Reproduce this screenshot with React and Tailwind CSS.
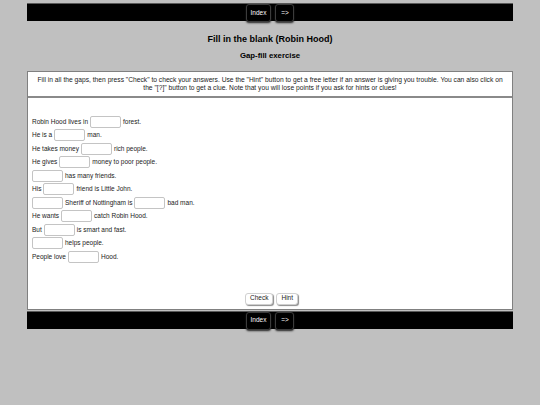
import React from 'react';

const sans = { fontFamily: '"Liberation Sans", Arial, sans-serif' };

const Gap = ({ first }) => (
  <span
    className={`inline-block w-[31px] h-[12px] border border-[#c4c4c4] rounded-[2px] bg-white align-middle ${
      first ? 'mr-[2px]' : 'mx-[2px]'
    }`}
  />
);

const NavBar = ({ className = '' }) => (
  <div className={`mx-[27px] h-[18px] bg-black border-t border-[#5a5a5a] flex justify-center items-start gap-[4px] ${className}`}>
    {['Index', '=>'].map((label) => (
      <button
        key={label}
        className="h-[18px] min-w-[19px] px-[4px] rounded-[3px] border border-[#3c3c3c] bg-black text-white text-[6.5px] leading-none shadow-[0_1px_2px_#222]"
      >
        {label}
      </button>
    ))}
  </div>
);

const lines = [
  ['Robin Hood lives in', 'gap', 'forest.'],
  ['He is a', 'gap', 'man.'],
  ['He takes money', 'gap', 'rich people.'],
  ['He gives', 'gap', 'money to poor people.'],
  ['gap', 'has many friends.'],
  ['His', 'gap', 'friend is Little John.'],
  ['gap', 'Sheriff of Nottingham is', 'gap', 'bad man.'],
  ['He wants', 'gap', 'catch Robin Hood.'],
  ['But', 'gap', 'is smart and fast.'],
  ['gap', 'helps people.'],
  ['People love', 'gap', 'Hood.'],
];

export default function App() {
  return (
    <div className="min-h-[405px] bg-[#c0c0c0] pt-[3px] text-[#222]" style={sans}>
      <NavBar />

      <h1 className="mt-[13px] text-center text-[9px] leading-[11px] font-bold text-black">
        Fill in the blank (Robin Hood)
      </h1>
      <h2 className="mt-[6px] text-center text-[7.8px] leading-[10px] font-bold text-black">
        Gap-fill exercise
      </h2>

      {/* Exercise panel */}
      <div className="mx-[27px] mt-[10px] bg-white border border-[#808080]">
        <div className="px-[4px] pt-[4px] pb-[5px] text-center text-[6.7px] leading-[7.5px] border-b-2 border-[#8a8a8a]">
          Fill in all the gaps, then press "Check" to check your answers. Use the "Hint" button to get a free letter if an
          answer is giving you trouble. You can also click on
          <br />
          the "[?]" button to get a clue. Note that you will lose points if you ask for hints or clues!
        </div>

        <div className="pt-[17px] px-[4px] text-[6.5px]">
          {lines.map((parts, i) => (
            <div key={i} className="h-[13.5px] flex items-center">
              {parts.map((p, j) => (p === 'gap' ? <Gap key={j} first={j === 0} /> : <span key={j}>{p}</span>))}
            </div>
          ))}
        </div>

        <div className="mt-[29px] pb-[4px] flex justify-center gap-[3px] pl-[3px]">
          <button className="h-[12px] px-[4px] rounded-[3px] border border-[#d0d0d0] bg-white text-[6.5px] leading-none shadow-[1px_1px_1px_#8c8c8c]">
            Check
          </button>
          <button className="h-[12px] px-[4px] rounded-[3px] border border-[#d0d0d0] bg-white text-[6.5px] leading-none shadow-[1px_1px_1px_#8c8c8c]">
            Hint
          </button>
        </div>
      </div>

      <NavBar className="mt-px" />
    </div>
  );
}
